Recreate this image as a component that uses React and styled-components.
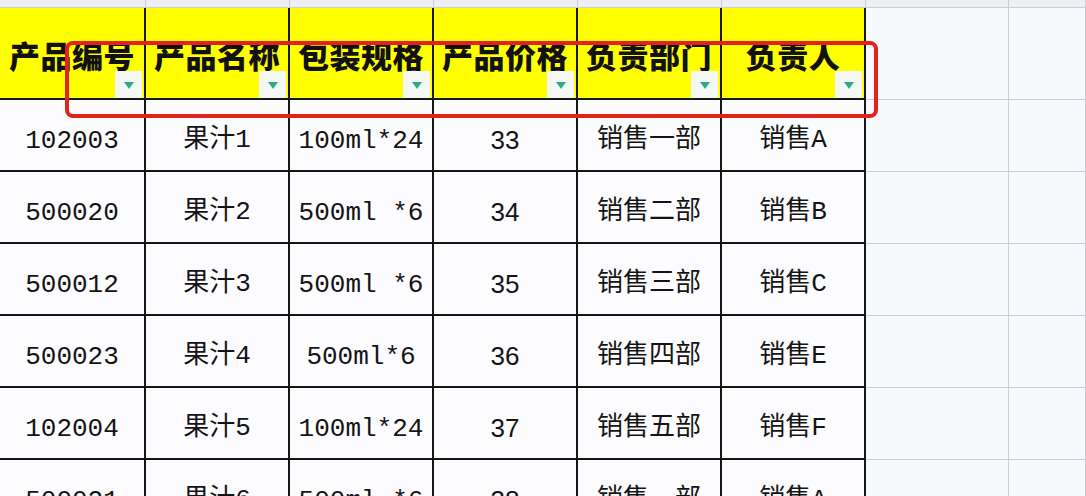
import React from 'react'
import styled, { createGlobalStyle, css } from 'styled-components';

const GlobalStyle = createGlobalStyle`
    html, body {
        margin: 0;
        padding: 0;
        background: #f8f9fc;
        overflow: hidden;
    }
    * {
        box-sizing: border-box;
    }
`;

const COLUMNS = '146px repeat(5, 144px) 143px 1fr';

const headers = ['产品编号', '产品名称', '包装规格', '产品价格', '负责部门', '负责人'];

const rows = [
    ['102003', '果汁1', '100ml*24', '33', '销售一部', '销售A'],
    ['500020', '果汁2', '500ml *6', '34', '销售二部', '销售B'],
    ['500012', '果汁3', '500ml *6', '35', '销售三部', '销售C'],
    ['500023', '果汁4', '500ml*6', '36', '销售四部', '销售E'],
    ['102004', '果汁5', '100ml*24', '37', '销售五部', '销售F'],
    ['500021', '果汁6', '500ml *6', '38', '销售一部', '销售A'],
];

// columns holding only latin text sit higher than CJK ones, push them down
const latinCols = [0, 2, 3];

function App() {
    return (
        <Page>
            <GlobalStyle />
            <Row $height={8}>
                {headers.map((h) => <Cell key={h} $kind="top" />)}
                <Cell $kind="top" />
                <Cell $kind="top" />
            </Row>
            <Row $height={92}>
                {headers.map((h) => (
                    <Cell key={h} $kind="head">
                        <HeadLabel>{h}</HeadLabel>
                        <FilterButton><Arrow /></FilterButton>
                    </Cell>
                ))}
                <Cell $kind="empty" />
                <Cell $kind="empty" />
            </Row>
            {rows.map((row, i) => (
                <Row key={i} $height={72}>
                    {row.map((value, j) => (
                        <Cell key={j} $kind="data" $sans={j === 3} $latin={latinCols.includes(j)}>{value}</Cell>
                    ))}
                    <Cell $kind="empty" />
                    <Cell $kind="empty" />
                </Row>
            ))}
            <Highlight />
        </Page>
    )
}

export default App

const Page = styled.div`
    position: relative;
    width: 100vw;
    height: 100vh;
    overflow: hidden;
    background: #f8f9fc;
`;

const Row = styled.div`
    display: grid;
    grid-template-columns: ${COLUMNS};
    height: ${(p) => p.$height}px;
`;

const Cell = styled.div`
    position: relative;
    display: flex;
    align-items: center;
    justify-content: center;
    white-space: nowrap;
    color: #141414;
    font-family: ${(p) => p.$sans ? '"Liberation Sans", "Noto Sans CJK SC", sans-serif' : '"Liberation Mono", "Noto Sans CJK SC", monospace'};
    font-size: 26px;
    padding-top: ${(p) => p.$latin ? 11 : 1}px;
    ${(p) => p.$kind === 'top' && css`
        background: #eef0f4;
        border-right: 1px solid #c9cdd8;
        border-bottom: 1px solid #c9cdd8;
    `}
    ${(p) => p.$kind === 'head' && css`
        background: #ffff00;
        border-right: 2px solid #161616;
        border-bottom: 2px solid #161616;
    `}
    ${(p) => p.$kind === 'data' && css`
        background: #fcfcfe;
        border-right: 2px solid #161616;
        border-bottom: 2px solid #161616;
    `}
    ${(p) => p.$kind === 'empty' && css`
        background: #f8f9fc;
        border-right: 1px solid #c9cdd8;
        border-bottom: 1px solid #c9cdd8;
    `}
`;

const HeadLabel = styled.span`
    font-family: "Noto Sans CJK SC", sans-serif;
    font-weight: 900;
    font-size: 31px;
    letter-spacing: 0.5px;
    color: #111;
    margin-top: 2px;
`;

const FilterButton = styled.div`
    position: absolute;
    right: 2px;
    bottom: 0;
    width: 27px;
    height: 27px;
    background: #f5f7f5;
    display: flex;
    align-items: center;
    justify-content: center;
`;

const Arrow = styled.span`
    width: 0;
    height: 0;
    border-left: 5.5px solid transparent;
    border-right: 5.5px solid transparent;
    border-top: 7px solid #2fa893;
    margin-top: 1px;
`;

const Highlight = styled.div`
    position: absolute;
    left: 65px;
    top: 41px;
    width: 813px;
    height: 77px;
    border: 4px solid #e4211d;
    border-radius: 8px;
    pointer-events: none;
`;
